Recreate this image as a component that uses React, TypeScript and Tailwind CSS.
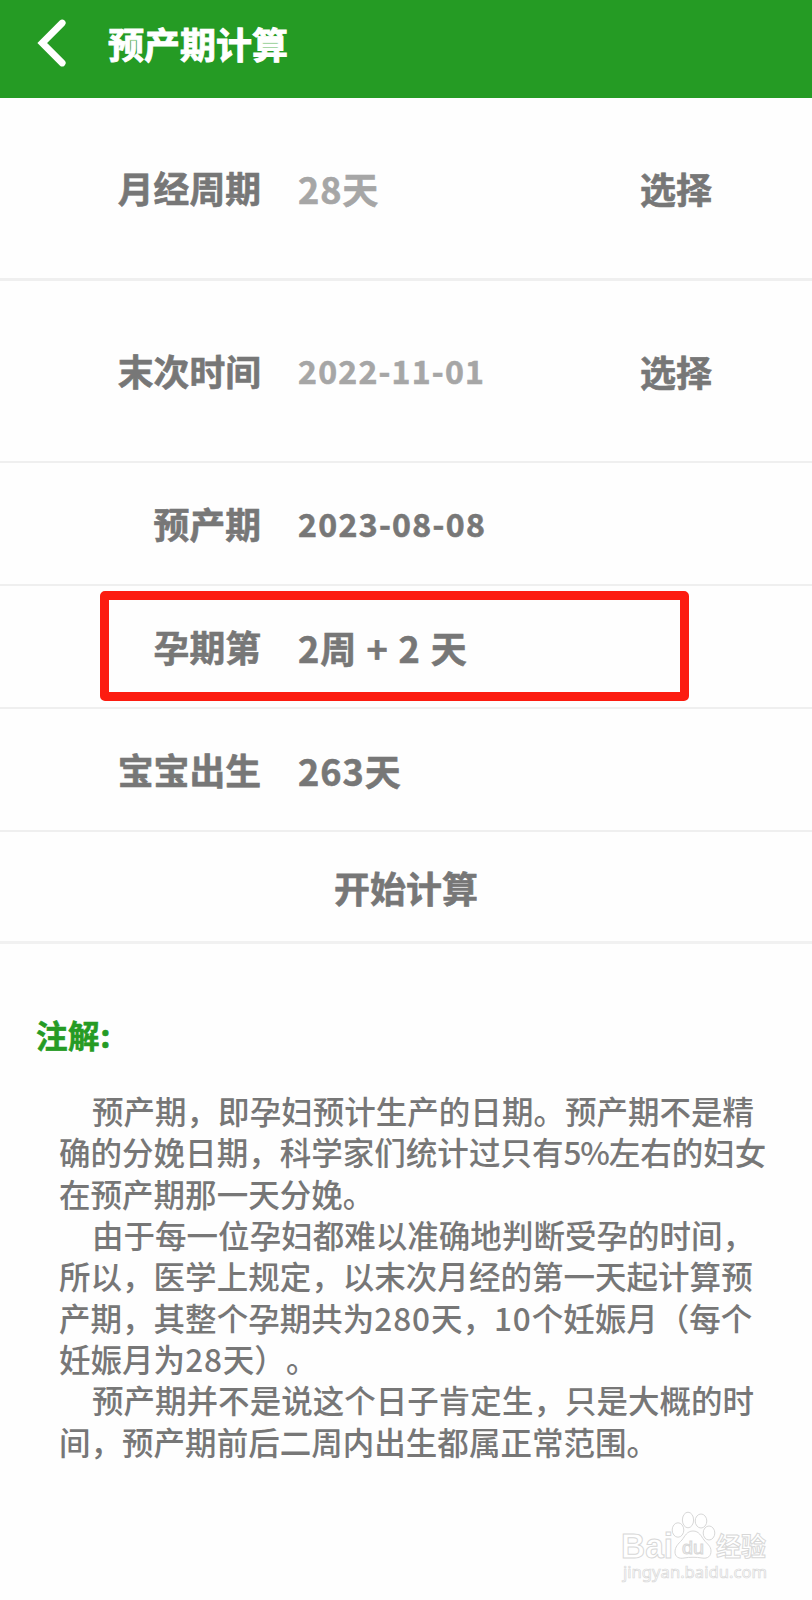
import React from "react";

type RowProps = {
  label: string;
  height: string;
  action?: string;
  children: React.ReactNode;
  highlighted?: boolean;
};

function Row({ label, height, action, children, highlighted }: RowProps) {
  return (
    <div className={`relative flex items-center border-[#efefef] ${height}`}>
      <div className="w-[261px] text-right text-[35.8px] leading-none">{label}</div>
      <div className="ml-[37px] flex w-[342px] items-center whitespace-pre">{children}</div>
      {action && (
        <button className="text-[36px] leading-none font-bold [-webkit-text-stroke:0.6px_currentColor]">{action}</button>
      )}
      {highlighted && (
        <div className="pointer-events-none absolute top-[5px] left-[99.5px] h-[110px] w-[589.5px] rounded-[5px] border-9 border-[#fc1c10]" />
      )}
    </div>
  );
}

const lines = [
  { text: "预产期，即孕妇预计生产的日期。预产期不是精", indent: true },
  { text: "确的分娩日期，科学家们统计过只有5%左右的妇女" },
  { text: "在预产期那一天分娩。" },
  { text: "由于每一位孕妇都难以准确地判断受孕的时间，", indent: true },
  { text: "所以，医学上规定，以末次月经的第一天起计算预" },
  { text: "产期，其整个孕期共为280天，10个妊娠月（每个" },
  { text: "妊娠月为28天）。" },
  { text: "预产期并不是说这个日子肯定生，只是大概的时", indent: true },
  { text: "间，预产期前后二周内出生都属正常范围。" },
];

function NoteLine({ text, indent }: { text: string; indent?: boolean }) {
  return (
    <p className={indent ? "pl-[33px]" : ""}>
      {text.split(/(\d+%?)/).map((part, i) => {
        if (!/^\d/.test(part)) return part;
        return (
          <span key={i} className={part.endsWith("%") ? "tracking-[-1.2px]" : "tracking-[0.9px]"}>
            {part}
          </span>
        );
      })}
    </p>
  );
}

function Watermark() {
  return (
    <svg
      className="absolute top-[1505px] left-[615px]"
      width="160"
      height="85"
      viewBox="0 0 160 85"
      fill="#ffffff"
      stroke="#d8d8d8"
      strokeWidth="1"
    >
      <g fontFamily="'Liberation Sans', 'Noto Sans CJK SC', sans-serif" fontWeight="700">
        <text x="6" y="53" fontSize="35" textLength="52" lengthAdjust="spacingAndGlyphs">Bai</text>
        <text x="101" y="51" fontSize="26" textLength="50" lengthAdjust="spacingAndGlyphs">经验</text>
      </g>
      <ellipse cx="63" cy="25" rx="5.8" ry="7.2" />
      <ellipse cx="73" cy="15" rx="5.6" ry="7.8" />
      <ellipse cx="86" cy="16" rx="5.8" ry="7" />
      <ellipse cx="94" cy="28" rx="5.8" ry="7" />
      <path d="M78 26C72 26 70 31 67 35C63 39 60 42 60 47C60 52 64 54 69 53C75 52 81 52 87 53C93 54 96 51 96 46C96 41 92 39 89 35C86 31 84 26 78 26Z" />
      <text x="67" y="49" fontSize="18" fontFamily="'Liberation Sans', sans-serif" textLength="22" lengthAdjust="spacingAndGlyphs">du</text>
      <text x="8" y="73" fontSize="17" fontFamily="'Noto Sans', sans-serif" textLength="144" lengthAdjust="spacingAndGlyphs" strokeWidth="0.7">jingyan.baidu.com</text>
    </svg>
  );
}

export default function App() {
  return (
    <div className="relative h-[1600px] w-[812px] overflow-hidden bg-[#fefefe] font-['Noto_Sans_CJK_SC',sans-serif] text-[#777777]">
      <header className="flex h-[98px] items-center bg-[#259b24] text-white">
        <svg className="mt-[-12px] ml-[36px]" width="32" height="52" viewBox="0 0 32 52" fill="none" stroke="currentColor" strokeWidth="6.8" strokeLinecap="round" strokeLinejoin="miter">
          <path d="M26.2 6L6.2 26L26.2 46" />
        </svg>
        <h1 className="mt-[-12px] ml-[40px] text-[36px] leading-none font-bold [-webkit-text-stroke:0.9px_currentColor]">预产期计算</h1>
      </header>

      <main className="font-bold [-webkit-text-stroke:0.6px_currentColor]">
        <Row label="月经周期" height="h-[183px] border-b-3" action="选择">
          <span className="text-[36px] leading-none text-[#a6a6a6]">
            <span className="tracking-[0.9px]">28</span>天
          </span>
        </Row>
        <Row label="末次时间" height="h-[182px] border-b-2" action="选择">
          <span className="pb-[2px] text-[32px] leading-none tracking-[1.25px] text-[#a6a6a6]">2022-11-01</span>
        </Row>
        <Row label="预产期" height="h-[123px] border-b-2">
          <span className="pb-[2px] text-[32px] leading-none tracking-[1.35px]">2023-08-08</span>
        </Row>
        <Row label="孕期第" height="h-[123px] border-b-2" highlighted>
          <span className="text-[36px] leading-none [word-spacing:1.5px]">
            <span className="tracking-[0.9px]">2</span>周<span className="tracking-[0.6px]"> + 2 </span>天
          </span>
        </Row>
        <Row label="宝宝出生" height="h-[123px] border-b-2">
          <span className="text-[36px] leading-none">
            <span className="tracking-[1px]">263</span>天
          </span>
        </Row>
        <button className="flex h-[112px] w-full items-center justify-center border-b-3 border-[#f1f1f1] text-[36px] leading-none font-bold [-webkit-text-stroke:0.6px_currentColor]">
          开始计算
        </button>
      </main>

      <section className="pt-[74px]">
        <h2 className="ml-[36px] text-[31.5px] leading-[32px] font-bold tracking-[0.6px] text-[#259b24] [-webkit-text-stroke:0.6px_currentColor]">注解:</h2>
        <div className="mt-[40px] ml-[59px] text-[31.5px] leading-[41.35px] font-medium tracking-[0.03px] whitespace-nowrap [text-spacing-trim:space-all]">
          {lines.map((line) => (
            <NoteLine key={line.text} text={line.text} indent={line.indent} />
          ))}
        </div>
      </section>
      <Watermark />
    </div>
  );
}
